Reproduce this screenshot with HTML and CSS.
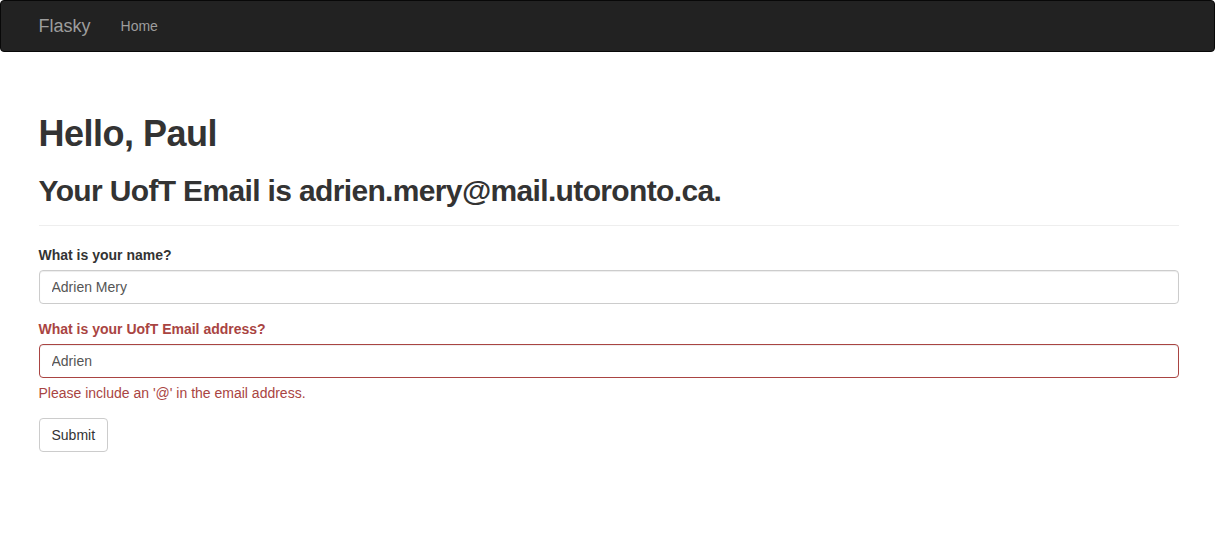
FILE: index.html
```html
<!DOCTYPE html>
<html lang="en">
<head>
<meta charset="utf-8">
<title>Flasky</title>
<link rel="stylesheet" href="styles.css">
</head>
<body>
<nav class="navbar">
  <div class="container nav-inner">
    <a class="brand" href="#">Flasky</a>
    <ul class="nav-links">
      <li><a href="#">Home</a></li>
    </ul>
  </div>
</nav>
<div class="container main">
  <div class="page-header">
    <h1>Hello, Paul</h1>
    <h2>Your UofT Email is adrien.mery@mail.utoronto.ca.</h2>
  </div>
  <form class="form">
    <div class="form-group">
      <label class="control-label" for="name">What is your name?</label>
      <input class="form-control" id="name" type="text" value="Adrien Mery">
    </div>
    <div class="form-group has-error">
      <label class="control-label" for="email">What is your UofT Email address?</label>
      <input class="form-control" id="email" type="text" value="Adrien">
      <span class="help-block">Please include an '@' in the email address.</span>
    </div>
    <button class="btn" type="button">Submit</button>
  </form>
</div>
</body>
</html>
```
FILE: styles.css
```css
* { box-sizing: border-box; }
html, body { margin: 0; padding: 0; }
body {
  font-family: "Liberation Sans", Arial, sans-serif;
  font-size: 14px;
  line-height: 1.42857143;
  color: #333;
  background: #fff;
}
.container {
  width: 1170px;
  margin: 0 auto;
  padding: 0 15px;
}
.navbar {
  height: 52px;
  background: #222;
  border: 1px solid #080808;
  border-radius: 4px;
}
.nav-inner {
  display: flex;
  align-items: stretch;
  height: 50px;
  padding-left: 16px;
  padding-right: 14px;
}
.brand {
  display: block;
  margin-left: -15px;
  padding: 15px;
  font-size: 18px;
  line-height: 20px;
  color: #9d9d9d;
  text-decoration: none;
}
.nav-links {
  display: flex;
  list-style: none;
  margin: 0;
  padding: 0;
}
.nav-links a {
  display: block;
  padding: 15px;
  line-height: 20px;
  color: #9d9d9d;
  text-decoration: none;
}
.main {
  padding-top: 60px;
  padding-left: 16px;
  padding-right: 14px;
}
.page-header {
  padding-bottom: 8px;
  margin-bottom: 19px;
  border-bottom: 1px solid #eee;
}
h1, h2 {
  font-family: "Liberation Sans", Arial, sans-serif;
  font-weight: bold;
  line-height: 1.1;
  color: #333;
  margin: 0;
}
h1 { font-size: 36px; margin-top: 2px; margin-bottom: 8px; letter-spacing: -0.5px; }
h2 { font-size: 30px; margin-top: 20px; margin-bottom: 10px; letter-spacing: -0.65px; }
.form-group { margin-bottom: 15px; }
.control-label {
  display: inline-block;
  max-width: 100%;
  margin-bottom: 5px;
  font-weight: bold;
}
.form-control {
  display: block;
  width: 100%;
  height: 34px;
  padding: 6px 12px;
  font-family: inherit;
  font-size: 14px;
  line-height: 1.42857143;
  color: #555;
  background: #fff;
  border: 1px solid #ccc;
  border-radius: 4px;
  box-shadow: inset 0 1px 1px rgba(0,0,0,.075);
}
.has-error .control-label,
.has-error .help-block { color: #a94442; }
.has-error .form-control { border-color: #a94442; }
.help-block {
  display: block;
  margin-top: 5px;
  margin-bottom: 10px;
}
.btn {
  display: inline-block;
  padding: 6px 12px;
  font-family: inherit;
  font-size: 14px;
  line-height: 1.42857143;
  color: #333;
  background: #fff;
  border: 1px solid #ccc;
  border-radius: 4px;
  cursor: pointer;
}
```
